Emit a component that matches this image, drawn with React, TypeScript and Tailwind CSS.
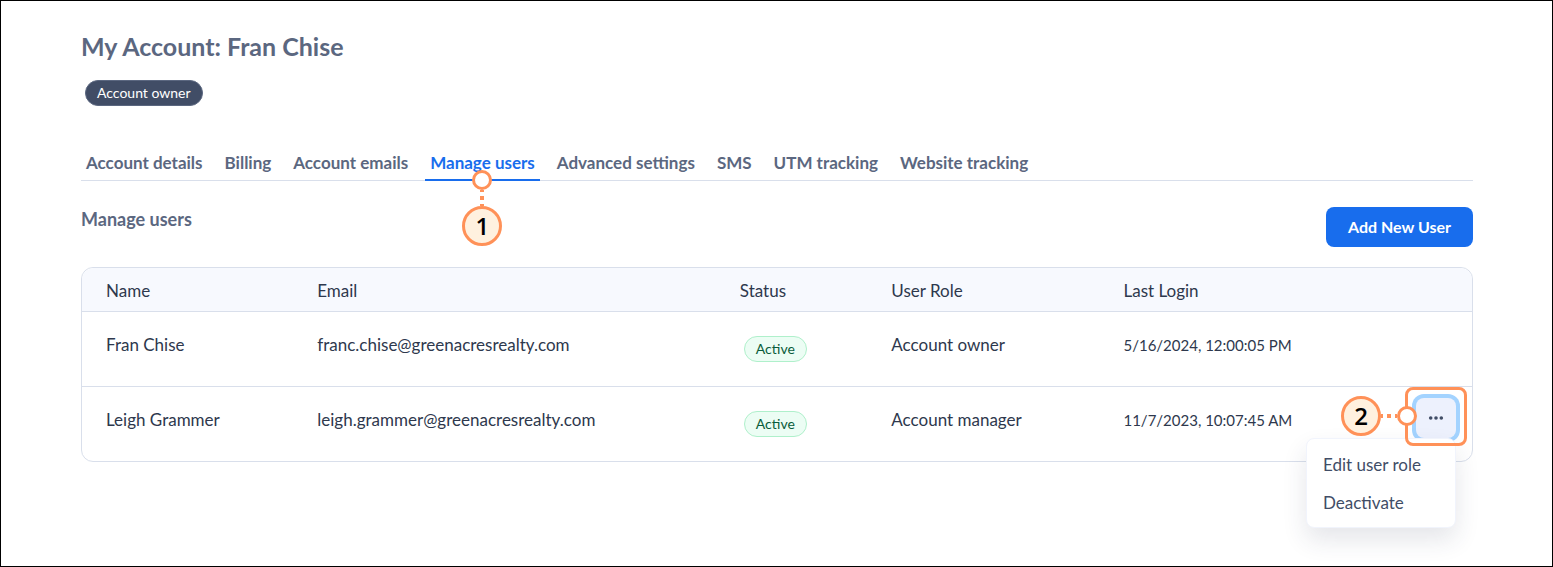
import { useState } from "react";
import clsx from "clsx";

const tabs = [
  "Account details",
  "Billing",
  "Account emails",
  "Manage users",
  "Advanced settings",
  "SMS",
  "UTM tracking",
  "Website tracking",
];

const users = [
  {
    name: "Fran Chise",
    email: "franc.chise@greenacresrealty.com",
    status: "Active",
    role: "Account owner",
    lastLogin: "5/16/2024, 12:00:05 PM",
    editable: false,
  },
  {
    name: "Leigh Grammer",
    email: "leigh.grammer@greenacresrealty.com",
    status: "Active",
    role: "Account manager",
    lastLogin: "11/7/2023, 10:07:45 AM",
    editable: true,
  },
];

function StepNumber({ children }: { children: string }) {
  return (
    <span className="flex size-10 shrink-0 items-center justify-center rounded-full border-3 border-[#ff9158] bg-[#fff1df] font-['Open_Sans',sans-serif] text-2xl font-semibold text-black">
      {children}
    </span>
  );
}

function StepDot() {
  return <span className="size-5 shrink-0 rounded-full border-3 border-[#ff9158] bg-white" />;
}

function TabStep() {
  return (
    <span className="pointer-events-none absolute top-full left-1/2 z-10 -mt-[11px] flex -translate-x-1/2 flex-col items-center">
      <StepDot />
      <svg width="4" height="16" className="block" aria-hidden="true">
        <path d="M0 0h4v2H0zM0 6h4v4H0zM0 14h4v2H0z" fill="#ff9158" />
      </svg>
      <StepNumber>1</StepNumber>
    </span>
  );
}

function MenuStep() {
  return (
    <span className="pointer-events-none absolute -inset-x-[11px] -top-[11px] z-30 h-[59px] rounded-lg border-3 border-[#ff9158]">
      <span className="absolute top-[6px] -left-[67px] flex items-center">
        <StepNumber>2</StepNumber>
        <svg width="16" height="4" className="block" aria-hidden="true">
          <path d="M0 0h2v4H0zM6 0h4v4H6zM14 0h2v4h-2z" fill="#ff9158" />
        </svg>
        <StepDot />
      </span>
    </span>
  );
}

function RowMenu() {
  const [open, setOpen] = useState(true);
  return (
    <div className="relative inline-block text-left align-top">
      <button
        type="button"
        aria-label="User actions"
        aria-expanded={open}
        onClick={() => setOpen(!open)}
        className="flex size-10 items-center justify-center rounded-lg bg-[#edf1fd] ring-4 ring-[#a3d3ff]"
      >
        <svg width="16" height="4" viewBox="0 0 16 4" fill="#414d66" aria-hidden="true">
          <circle cx="2.7" cy="2" r="1.8" />
          <circle cx="8" cy="2" r="1.8" />
          <circle cx="13.3" cy="2" r="1.8" />
        </svg>
      </button>
      {open && (
        <div
          role="menu"
          className="absolute top-full right-0 z-20 flex w-[150px] flex-col rounded-lg border border-[#f1f4fc] bg-white pt-[7px] pb-[5px] text-[#414d66] shadow-[0_12px_24px_rgba(40,50,80,0.12)]"
        >
          <button type="button" role="menuitem" className="h-[38px] px-4 text-left">
            Edit user role
          </button>
          <button type="button" role="menuitem" className="h-[38px] px-4 text-left">
            Deactivate
          </button>
        </div>
      )}
      <MenuStep />
    </div>
  );
}

export default function App() {
  return (
    <main className="min-h-screen border border-black bg-white pt-[27px] pr-[79px] pb-16 pl-20 font-[Lato,sans-serif] text-[17px] leading-6 text-[#2e384d]">
      <h1 className="text-[25px] leading-9 font-bold text-[#5b6780]">My Account: Fran Chise</h1>
      <span className="mt-4 ml-1 inline-flex h-[26px] items-center rounded-full border border-[#5b6780] bg-[#414d66] px-[11px] align-top text-[14px] text-white">
        Account owner
      </span>

      <nav className="mt-10 flex gap-3 border-b border-[#d9dfeb] font-bold text-[#5b6780]">
        {tabs.map((tab) => {
          const active = tab === "Manage users";
          return (
            <div key={tab} className="relative -mb-px">
              <a
                href="#"
                aria-current={active ? "page" : undefined}
                className={clsx(
                  "block border-b-2 px-[5px] pt-[5px] pb-1 whitespace-nowrap",
                  active ? "border-[#186ded] text-[#186ded]" : "border-transparent",
                )}
              >
                {tab}
              </a>
              {active && <TabStep />}
            </div>
          );
        })}
      </nav>

      <div className="mt-[26px] flex items-start justify-between">
        <h2 className="text-[18px] font-bold text-[#5b6780]">Manage users</h2>
        <button type="button" className="h-10 rounded-lg bg-[#186ded] px-[22px] text-[16px] font-bold text-white">
          Add New User
        </button>
      </div>

      <div className="mt-5 rounded-xl border border-[#d9dfeb]">
        <table className="w-full table-fixed border-separate border-spacing-0 text-left">
          <colgroup>
            <col className="w-[15.2%]" />
            <col className="w-[30.4%]" />
            <col className="w-[10.9%]" />
            <col className="w-[16.7%]" />
            <col className="w-[20.8%]" />
            <col className="w-[6%]" />
          </colgroup>
          <thead>
            <tr className="h-11 *:border-b *:border-[#d9dfeb] *:bg-[#f7f9fe] *:pt-[2px] *:font-normal">
              <th className="rounded-tl-xl px-6">Name</th>
              <th className="px-6">Email</th>
              <th className="px-6">Status</th>
              <th className="px-6">User Role</th>
              <th className="px-6">Last Login</th>
              <th className="rounded-tr-xl" aria-label="Actions" />
            </tr>
          </thead>
          <tbody>
            {users.map((user, i) => (
              <tr
                key={user.name}
                className={clsx(
                  "align-top *:border-[#d9dfeb]",
                  i < users.length - 1 ? "h-[75px] *:border-b" : "h-[74px]",
                )}
              >
                <td className="px-6 pt-[21px]">{user.name}</td>
                <td className="px-6 pt-[21px]">{user.email}</td>
                <td className="px-6 pt-6">
                  <span className="ml-1 inline-flex h-[26px] items-center rounded-full border border-[#aff0cb] bg-[#ecfdf4] px-[11px] align-top text-[14px] text-[#0a5c3b]">
                    {user.status}
                  </span>
                </td>
                <td className="px-6 pt-[21px]">{user.role}</td>
                <td className="px-6 pt-[21px] text-[15px] whitespace-nowrap">{user.lastLogin}</td>
                <td className="pt-[11px] pr-4 text-right">{user.editable && <RowMenu />}</td>
              </tr>
            ))}
          </tbody>
        </table>
      </div>
    </main>
  );
}
